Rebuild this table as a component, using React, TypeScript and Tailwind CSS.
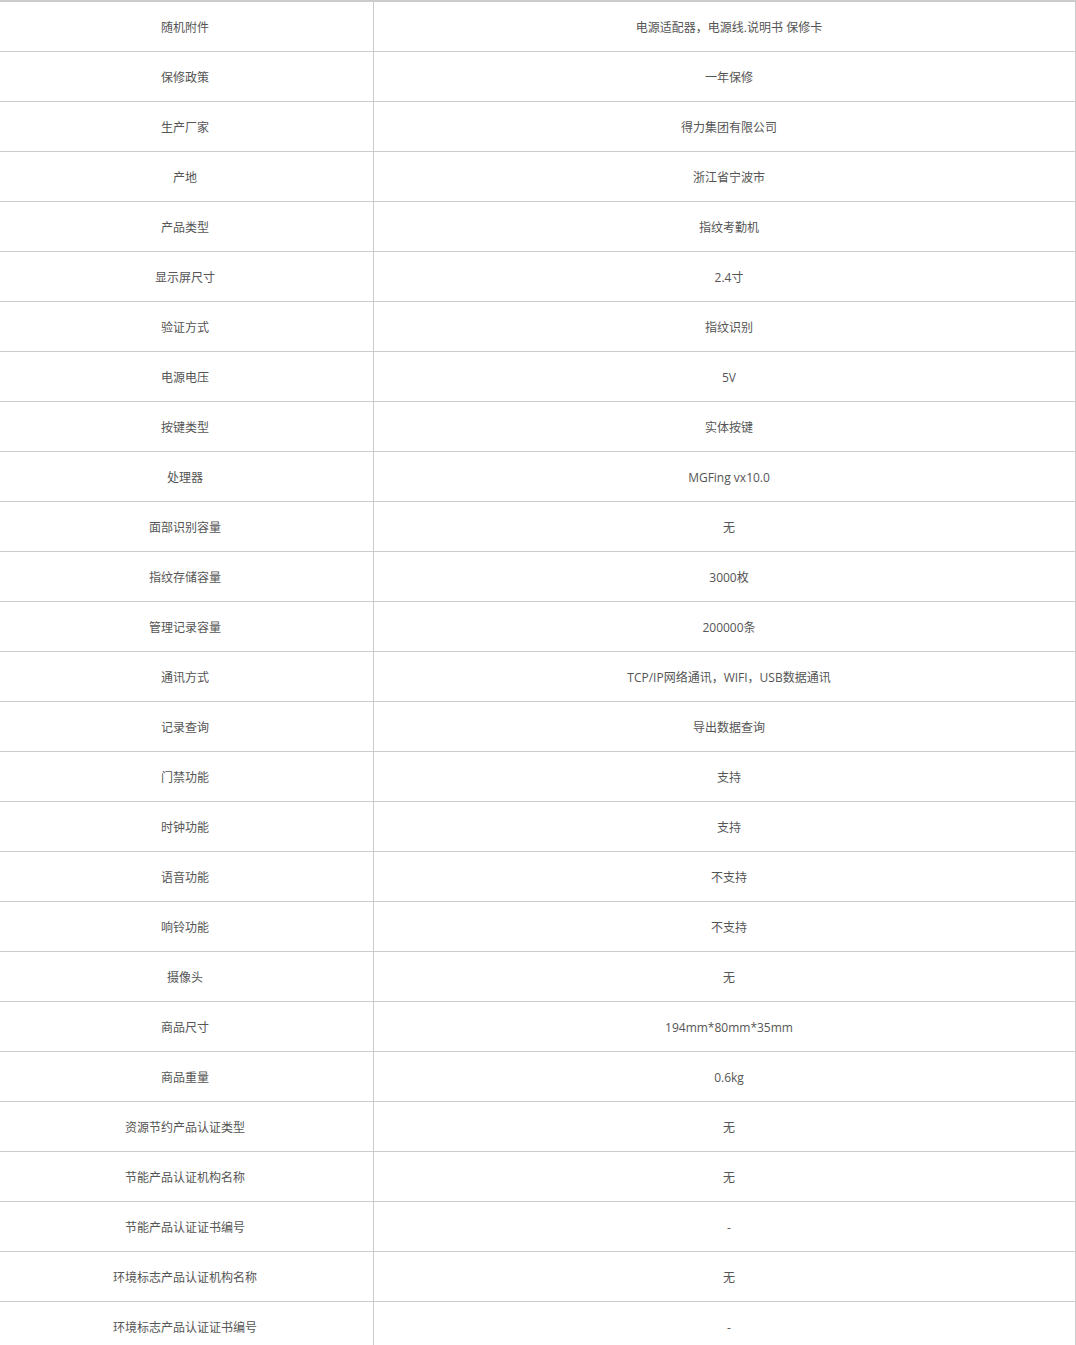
const rows: [string, string][] = [
  ["随机附件", "电源适配器，电源线.说明书 保修卡"],
  ["保修政策", "一年保修"],
  ["生产厂家", "得力集团有限公司"],
  ["产地", "浙江省宁波市"],
  ["产品类型", "指纹考勤机"],
  ["显示屏尺寸", "2.4寸"],
  ["验证方式", "指纹识别"],
  ["电源电压", "5V"],
  ["按键类型", "实体按键"],
  ["处理器", "MGFing vx10.0"],
  ["面部识别容量", "无"],
  ["指纹存储容量", "3000枚"],
  ["管理记录容量", "200000条"],
  ["通讯方式", "TCP/IP网络通讯，WIFI，USB数据通讯"],
  ["记录查询", "导出数据查询"],
  ["门禁功能", "支持"],
  ["时钟功能", "支持"],
  ["语音功能", "不支持"],
  ["响铃功能", "不支持"],
  ["摄像头", "无"],
  ["商品尺寸", "194mm*80mm*35mm"],
  ["商品重量", "0.6kg"],
  ["资源节约产品认证类型", "无"],
  ["节能产品认证机构名称", "无"],
  ["节能产品认证证书编号", "-"],
  ["环境标志产品认证机构名称", "无"],
  ["环境标志产品认证证书编号", "-"],
];

export default function App() {
  return (
    <div
      className="w-[1076px] h-[1345px] overflow-hidden bg-white"
      style={{ fontFamily: '"Open Sans", "Noto Sans CJK SC", sans-serif' }}
    >
      <div className="w-[1076px] border-t-2 border-r border-[#cccccc]">
        {rows.map(([k, v], i) => (
          <div key={i} className="flex h-[50px] border-b border-[#cccccc]">
            <div className="w-[373px] shrink-0 flex items-center justify-center text-[12px] text-[#555555] pr-[3px] pt-[2px]">
              {k}
            </div>
            <div className="flex-1 border-l border-[#cccccc] flex items-center justify-center text-[12px] text-[#555555] pl-[9px] pt-[2px]">
              {v}
            </div>
          </div>
        ))}
      </div>
    </div>
  );
}
